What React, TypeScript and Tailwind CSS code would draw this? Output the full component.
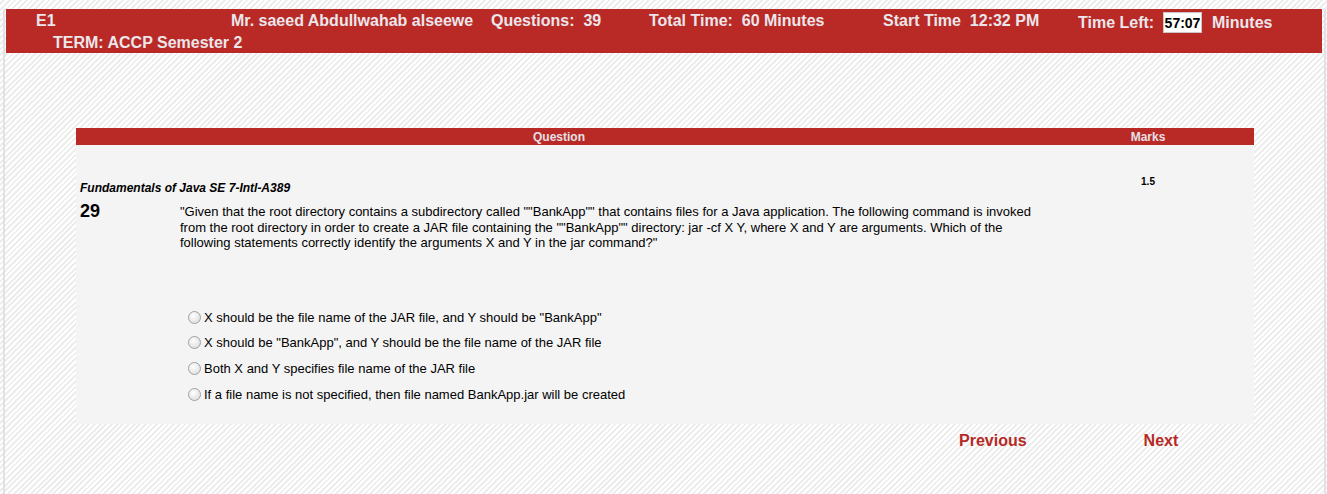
import React from "react";

const options = [
  'X should be the file name of the JAR file, and Y should be "BankApp"',
  'X should be "BankApp", and Y should be the file name of the JAR file',
  "Both X and Y specifies file name of the JAR file",
  "If a file name is not specified, then file named BankApp.jar will be created",
];

export default function App() {
  return (
    <div className="h-[494px] w-[1327px] overflow-hidden bg-[repeating-linear-gradient(135deg,#ffffff_0px,#ffffff_2px,#ededed_2px,#ededed_4px)] pl-[3px] pr-px font-['Liberation_Sans',Arial,sans-serif]">
      <div className="h-full border-x-2 border-[#e2e2e2] pl-px pr-[2px]">
        {/* Header bar */}
        <div className="mt-[9px] h-[44px] bg-[#b92a26] font-bold text-[16px] leading-[18px] text-[#ebe6eb]">
          <div className="flex items-start pt-[3px] pl-[30px]">
            <span className="w-[195px]">E1</span>
            <span className="w-[260px]">Mr. saeed Abdullwahab alseewe</span>
            <span className="w-[158px] whitespace-pre">Questions:  39</span>
            <span className="w-[234px] whitespace-pre">Total Time:  60 Minutes</span>
            <span className="w-[195px] whitespace-pre">Start Time  12:32 PM</span>
            <div className="flex h-[21px] items-center">
              <span className="w-[85px]">Time Left:</span>
              <span className="flex h-[21px] w-[39px] items-center justify-center border border-[#c8c8c8] bg-white text-[14px] text-black">
                57:07
              </span>
              <span className="ml-[10px]">Minutes</span>
            </div>
          </div>
          <div className="mt-[1px] pl-[47px]">TERM: ACCP Semester 2</div>
        </div>

        {/* Question table */}
        <div className="ml-[70px] mt-[75px] w-[1178px]">
          <div className="flex h-[17px] items-center bg-[#b92a26] text-[12px] font-bold text-[#e6e0e6]">
            <div className="w-[966px] text-center">Question</div>
            <div className="flex-1 text-center">Marks</div>
          </div>
          <div className="flex h-[279px] bg-[#f4f4f4] text-[13px] text-black">
            <div className="w-[966px] pl-[4px] pt-[36px]">
              <div className="text-[12px] font-bold italic leading-[14px]">
                Fundamentals of Java SE 7-Intl-A389
              </div>
              <div className="mt-[6px] flex">
                <div className="w-[100px] text-[18px] font-bold leading-[20px]">29</div>
                <div className="mt-[3px] w-[862px] leading-[15.5px]">
                  "Given that the root directory contains a subdirectory called ""BankApp"" that contains files for a Java application. The following command is invoked from the root directory in order to create a JAR file containing the ""BankApp"" directory: jar -cf X Y, where X and Y are arguments. Which of the following statements correctly identify the arguments X and Y in the jar command?"
                </div>
              </div>
              <div className="mt-[59px] flex flex-col gap-[10.7px] pl-[108px]">
                {options.map((o) => (
                  <label key={o} className="flex h-[15px] items-center leading-[15px]">
                    <input
                      type="radio"
                      name="ans"
                      className="mr-[3px] h-[13px] w-[13px] appearance-none rounded-full border border-[#a0a0a0] bg-[radial-gradient(circle_at_40%_35%,#ffffff,#d6d6d6)]"
                    />
                    {o}
                  </label>
                ))}
              </div>
            </div>
            <div className="flex-1 pt-[31px] text-center text-[10px] font-bold leading-[12px]">1.5</div>
          </div>
          <div className="mt-[8px] flex pl-[883px] text-[16px] font-bold leading-[18px] text-[#b52a25]">
            <span className="cursor-pointer">Previous</span>
            <span className="ml-[117px] cursor-pointer">Next</span>
          </div>
        </div>
      </div>
    </div>
  );
}
